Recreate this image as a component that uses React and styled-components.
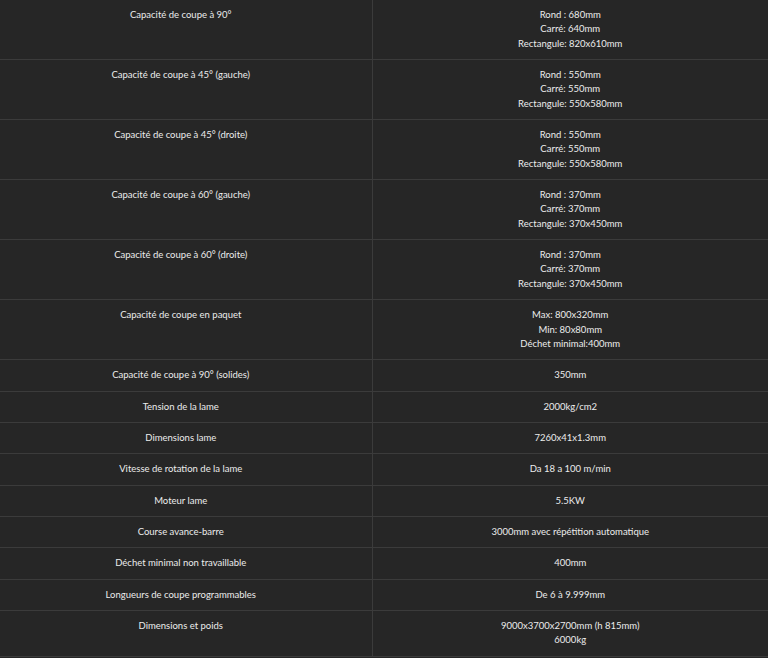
import React from "react";
import styled, { createGlobalStyle } from "styled-components";

const Global = createGlobalStyle`
  html, body { margin: 0; padding: 0; background: #262626; }
  body { font-family: Lato, "Open Sans", sans-serif; }
`;

const Table = styled.table`
  width: 768px;
  border-collapse: collapse;
  table-layout: fixed;
  background: #262626;
  color: #ececec;
  font-size: 9.5px;
  line-height: 14.35px;
`;

const Row = styled.tr`
  border-bottom: 1px solid #3b3b3b;
`;

const Cell = styled.td`
  vertical-align: top;
  text-align: center;
  padding: ${(p) => (p.$label ? "8px 18px 8px 8px" : "8px")};
  border-right: ${(p) => (p.$label ? "1px solid #3b3b3b" : "none")};
`;

const Line = styled.div``;

const rows = [
  ["Capacité de coupe à 90°", ["Rond : 680mm", "Carré: 640mm", "Rectangule: 820x610mm"]],
  ["Capacité de coupe à 45° (gauche)", ["Rond : 550mm", "Carré: 550mm", "Rectangule: 550x580mm"]],
  ["Capacité de coupe à 45° (droite)", ["Rond : 550mm", "Carré: 550mm", "Rectangule: 550x580mm"]],
  ["Capacité de coupe à 60° (gauche)", ["Rond : 370mm", "Carré: 370mm", "Rectangule: 370x450mm"]],
  ["Capacité de coupe à 60° (droite)", ["Rond : 370mm", "Carré: 370mm", "Rectangule: 370x450mm"]],
  ["Capacité de coupe en paquet", ["Max: 800x320mm", "Min: 80x80mm", "Déchet minimal:400mm"]],
  ["Capacité de coupe à 90° (solides)", ["350mm"]],
  ["Tension de la lame", ["2000kg/cm2"]],
  ["Dimensions lame", ["7260x41x1.3mm"]],
  ["Vitesse de rotation de la lame", ["Da 18 a 100 m/min"]],
  ["Moteur lame", ["5.5KW"]],
  ["Course avance-barre", ["3000mm avec répétition automatique"]],
  ["Déchet minimal non travaillable", ["400mm"]],
  ["Longueurs de coupe programmables", ["De 6 à 9.999mm"]],
  ["Dimensions et poids", ["9000x3700x2700mm (h 815mm)", "6000kg"]],
];

export default function App() {
  return (
    <>
      <Global />
      <Table>
        <colgroup>
          <col style={{ width: 372 }} />
          <col style={{ width: 396 }} />
        </colgroup>
        <tbody>
          {rows.map(([label, values]) => (
            <Row key={label}>
              <Cell $label>{label}</Cell>
              <Cell>
                {values.map((v) => (
                  <Line key={v}>{v}</Line>
                ))}
              </Cell>
            </Row>
          ))}
        </tbody>
      </Table>
    </>
  );
}
